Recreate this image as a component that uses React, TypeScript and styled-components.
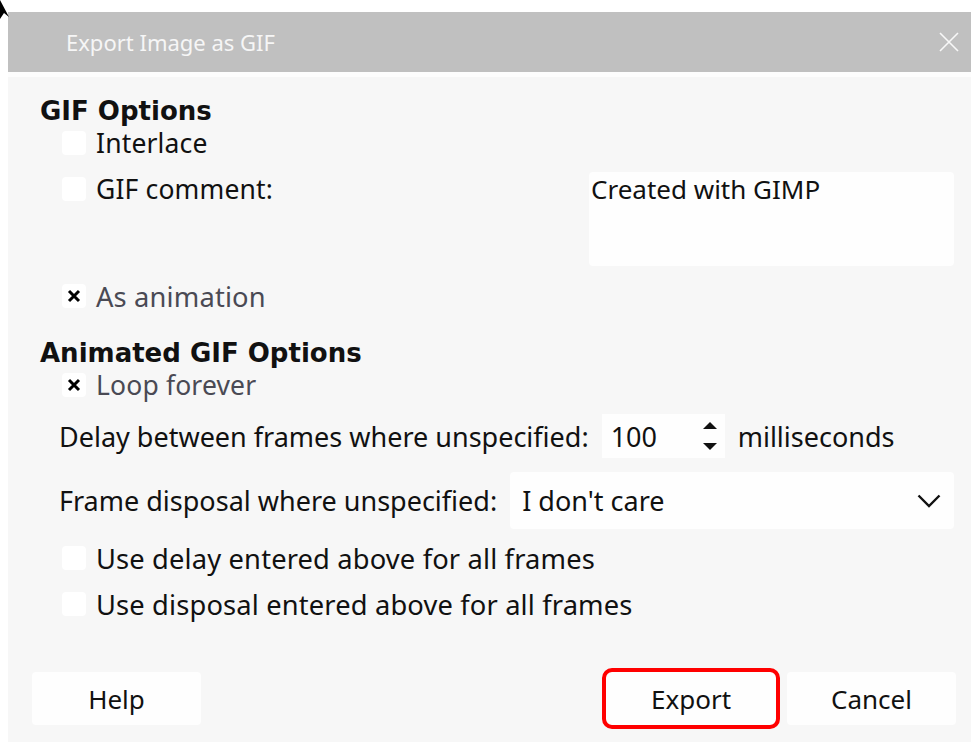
import styled, { createGlobalStyle } from "styled-components";

const GlobalStyle = createGlobalStyle`
  html, body {
    margin: 0;
    padding: 0;
    background: #ffffff;
  }
  body {
    font-family: "Noto Sans", "Open Sans", sans-serif;
    color: #111;
  }
`;

const Page = styled.div`
  position: relative;
  width: 971px;
  height: 742px;
  padding: 12px 0 0 8px;
  box-sizing: border-box;
  overflow: hidden;
`;

const Pointer = styled.svg`
  position: absolute;
  left: 0;
  top: 0;
`;

const Dialog = styled.div`
  display: flex;
  flex-direction: column;
  height: 100%;
`;

const TitleBar = styled.div`
  height: 60px;
  background: #c0c0c0;
  display: flex;
  align-items: center;
  justify-content: space-between;
  padding: 0 12px 0 58px;
  border-bottom: 5px solid #fdfdfd;
`;

const Title = styled.span`
  font-size: 22px;
  color: #f6f6f6;
`;

const Body = styled.div`
  flex: 1;
  background: #f7f7f7;
  padding: 19px 17px 0 24px;
  display: flex;
  flex-direction: column;
`;

const Heading = styled.div<{ $top?: number }>`
  font-family: "DejaVu Sans", sans-serif;
  font-weight: bold;
  font-size: 26px;
  line-height: 30px;
  margin: ${(p) => p.$top ?? 0}px 0 0 8px;
`;

const CheckRow = styled.label<{ $top?: number }>`
  display: flex;
  align-items: center;
  gap: 10px;
  height: 34px;
  margin: ${(p) => p.$top ?? 0}px 0 0 30px;
  font-size: 26.5px;
  letter-spacing: 0.15px;
`;

const Box = styled.span`
  width: 24px;
  height: 24px;
  border-radius: 4px;
  background: #ffffff;
  display: flex;
  align-items: center;
  justify-content: center;
`;

const Label = styled.span<{ $dim?: boolean; $wide?: boolean }>`
  color: ${(p) => (p.$dim ? "#4a4a54" : "#111")};
  font-size: ${(p) => (p.$wide ? "27.3px" : "inherit")};
`;

const CommentRow = styled.div`
  display: flex;
  justify-content: space-between;
  align-items: flex-start;
  margin-top: 12px;
`;

const TextArea = styled.div`
  width: 365px;
  height: 94px;
  background: #fefefe;
  border-radius: 4px;
  box-sizing: border-box;
  padding: 0 2px;
  font-size: 26px;
  line-height: 34px;
`;

const FieldRow = styled.div<{ $top: number }>`
  display: flex;
  align-items: center;
  gap: 13px;
  margin: ${(p) => p.$top}px 0 0 27px;
  font-size: 27px;
`;

const SpinBox = styled.div`
  width: 123px;
  height: 44px;
  background: #fefefe;
  display: flex;
  align-items: center;
  justify-content: space-between;
  padding: 0 7px 0 9px;
  box-sizing: border-box;
`;

const Combo = styled.div`
  flex: 1;
  height: 57px;
  background: #fefefe;
  border-radius: 4px;
  display: flex;
  align-items: center;
  justify-content: space-between;
  padding: 0 13px 0 12px;
  box-sizing: border-box;
`;

const ButtonRow = styled.div`
  display: flex;
  align-items: center;
  gap: 9px;
  margin: auto -2px 13px 0;
`;

const Button = styled.button<{ $marked?: boolean }>`
  width: ${(p) => (p.$marked ? 178 : 169)}px;
  height: ${(p) => (p.$marked ? 61 : 53)}px;
  background: #fefefe;
  border: ${(p) => (p.$marked ? "4px solid #ff0000" : "none")};
  border-radius: ${(p) => (p.$marked ? 10 : 4)}px;
  font-family: "Noto Sans", "Open Sans", sans-serif;
  font-size: 26px;
  color: #111;
  padding: 0;
  margin: ${(p) => (p.$marked ? "0 -2px 0 auto" : "0")};
`;

const Check = ({ on }: { on?: boolean }) => (
  <Box>
    {on && (
      <svg width="14" height="14" viewBox="0 0 14 14">
        <path d="M2 2 L12 12 M12 2 L2 12" stroke="#000" strokeWidth="3" />
      </svg>
    )}
  </Box>
);

export default function App() {
  return (
    <>
      <GlobalStyle />
      <Page>
        <Pointer width="10" height="20" viewBox="0 0 10 20">
          <path d="M0 0 L9 17 L4 13 L0 19 Z" fill="#000" />
        </Pointer>
        <Dialog>
          <TitleBar>
            <Title>Export Image as GIF</Title>
            <svg width="20" height="20" viewBox="0 0 20 20">
              <path d="M1 1 L19 19 M19 1 L1 19" stroke="#f8f8f8" strokeWidth="1.6" />
            </svg>
          </TitleBar>
          <Body>
            <Heading>GIF Options</Heading>
            <CheckRow>
              <Check />
              <Label>Interlace</Label>
            </CheckRow>
            <CommentRow>
              <CheckRow>
                <Check />
                <Label>GIF comment:</Label>
              </CheckRow>
              <TextArea>Created with GIMP</TextArea>
            </CommentRow>
            <CheckRow $top={13}>
              <Check on />
              <Label $dim $wide>As animation</Label>
            </CheckRow>

            <Heading $top={25}>Animated GIF Options</Heading>
            <CheckRow>
              <Check on />
              <Label $dim>Loop forever</Label>
            </CheckRow>
            <FieldRow $top={12}>
              <span>Delay between frames where unspecified:</span>
              <SpinBox>
                <span>100</span>
                <svg width="16" height="32" viewBox="0 0 16 32">
                  <path d="M1 9 L8 2 L15 9 Z" fill="#111" />
                  <path d="M1 23 L8 30 L15 23 Z" fill="#111" />
                </svg>
              </SpinBox>
              <span>milliseconds</span>
            </FieldRow>
            <FieldRow $top={14}>
              <span>Frame disposal where unspecified:</span>
              <Combo>
                <span>I don't care</span>
                <svg width="24" height="14" viewBox="0 0 24 14">
                  <path d="M1.5 1.5 L12 12 L22.5 1.5" fill="none" stroke="#111" strokeWidth="2.4" />
                </svg>
              </Combo>
            </FieldRow>
            <CheckRow $top={12}>
              <Check />
              <Label $wide>Use delay entered above for all frames</Label>
            </CheckRow>
            <CheckRow $top={12}>
              <Check />
              <Label $wide>Use disposal entered above for all frames</Label>
            </CheckRow>

            <ButtonRow>
              <Button>Help</Button>
              <Button $marked>Export</Button>
              <Button>Cancel</Button>
            </ButtonRow>
          </Body>
        </Dialog>
      </Page>
    </>
  );
}
